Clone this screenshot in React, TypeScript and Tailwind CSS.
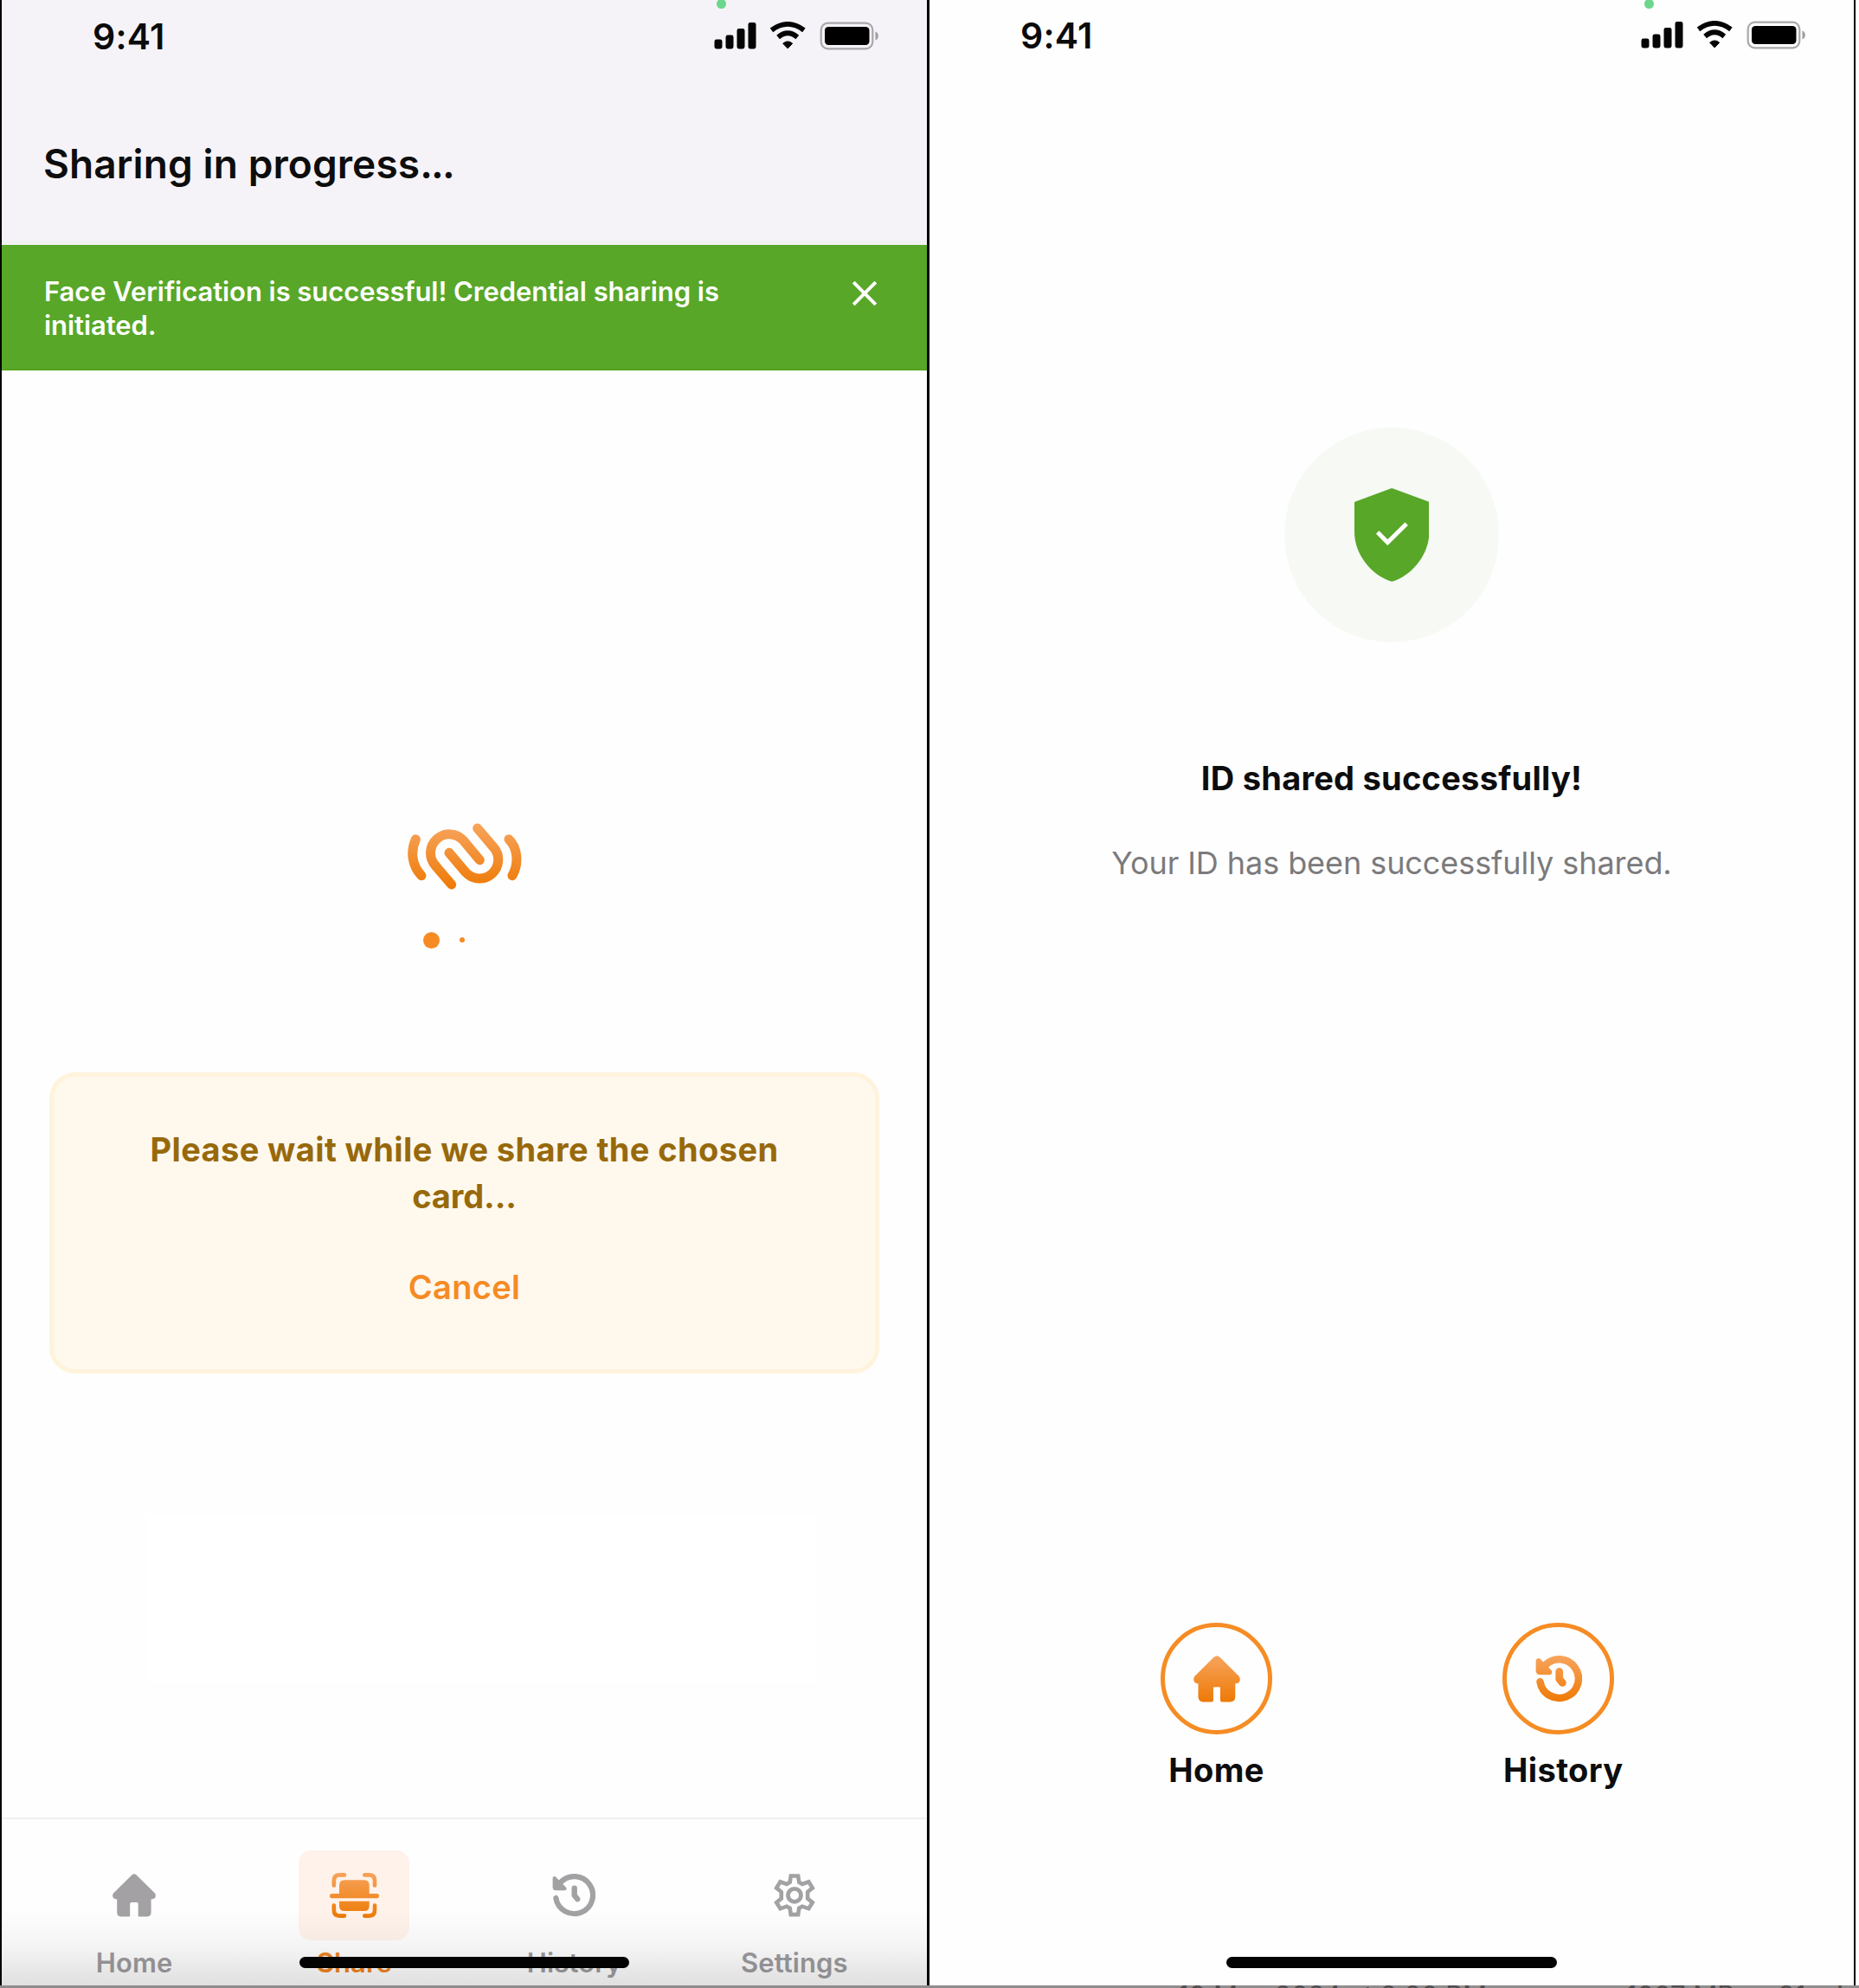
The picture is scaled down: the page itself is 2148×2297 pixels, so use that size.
import React from "react";

function StatusBar({ className = "" }: { className?: string }) {
  return (
    <div className={"relative flex h-[82px] w-full items-start " + className}>
      <span className="absolute left-[826px] top-[-1px] size-[11px] rounded-full bg-[#6bd68c]" />
      <span className="ml-[105px] w-[120px] text-[41px] font-semibold leading-[82px] tracking-[0.2px] text-[#0b0b0c]">9:41</span>
      <svg className="ml-auto mr-[54px] mt-[24px]" width="192" height="34" viewBox="0 0 192 34">
        <g fill="#050505">
          <rect x="0.5" y="20.5" width="9" height="11" rx="2.4" />
          <rect x="13.5" y="15.5" width="9" height="16" rx="2.4" />
          <rect x="26.5" y="8" width="9" height="23.5" rx="2.4" />
          <rect x="39.5" y="1" width="9" height="30.5" rx="2.4" />
          <path d="M79.7 25.2 Q85.200 20.6 90.7 25.2 L85.2 31Z" stroke="#050505" strokeWidth="1" strokeLinejoin="round" />
        </g>
        <g fill="none" stroke="#050505" strokeWidth="5.8">
          <path d="M66.500 9.8 Q85.200 -4 103.900 9.8" />
          <path d="M74.100 18 Q85.200 8.6 96.300 18" />
        </g>
        <rect x="123.7" y="1.7" width="59.6" height="29.6" rx="8" fill="none" stroke="#a9a7ab" strokeWidth="2.2" />
        <rect x="128" y="6" width="51.5" height="21" rx="4.2" fill="#000" />
        <path d="M186.500 11.5 C191 13 191 20 186.500 21.5Z" fill="#a09ea2" />
      </svg>
    </div>
  );
}

function Gradient({ id, y1, y2 }: { id: string; y1: number; y2: number }) {
  return (
    <defs>
      <linearGradient id={id} gradientUnits="userSpaceOnUse" x1="0" x2="0" y1={y1} y2={y2}>
        <stop offset="0" stopColor="#f7a35b" />
        <stop offset="1" stopColor="#ee7a06" />
      </linearGradient>
    </defs>
  );
}

function HomeIcon({ size, color, gradient }: { size: number; color?: string; gradient?: string }) {
  const paint = gradient ? "url(#" + gradient + ")" : color;
  return (
    <svg width={size} height={size} viewBox={gradient ? "-1 -1 52 52" : "0 0 50 50"}>
      {gradient && <Gradient id={gradient} y1={0} y2={50} />}
      <path
        fill={paint}
        stroke={gradient ? paint : "none"}
        strokeWidth="1.8"
        strokeLinejoin="round"
        d="M22.3 1.4 Q25 -1 27.7 1.4 L49 22.6 Q50.8 25.4 49 28 Q47.8 29.4 44.6 29.4 V44.5 Q44.6 49.6 39.6 49.6 H30.6 Q29.7 49.6 29.7 48.6 V35 Q29.7 33 27.7 33 H22.2 Q20.2 33 20.2 35 V48.6 Q20.2 49.6 19.2 49.6 H10.4 Q5.2 49.6 5.2 44.5 V29.4 Q2.2 29.4 1 28 Q-.8 25.4 1 22.6Z"
      />
    </svg>
  );
}

function HistoryIcon({ size, color, gradient }: { size: number; color?: string; gradient?: string }) {
  const paint = gradient ? "url(#" + gradient + ")" : color;
  const grow = gradient ? 2 : 0;
  return (
    <svg
      width={size}
      height={size}
      viewBox={gradient ? "-1 -1 52 52" : "0 0 50 50"}
      fill="none"
      stroke={paint}
      strokeLinecap="round"
      strokeLinejoin="round"
      className={gradient ? "" : "-ml-[2px]"}
    >
      {gradient && <Gradient id={gradient} y1={0} y2={50} />}
      <path strokeWidth={6.2 + grow} d="M4.3 28 A21.5 21.5 0 1 0 9.6 10.2" />
      <path strokeWidth={4 + grow} fill={paint} d="M2.6 5 V15.6 Q2.6 17.2 4.2 17.2 H14.6Z" />
      <path strokeWidth={6.4 + grow} d="M25.7 16.6 V25 L29.2 29.2" />
    </svg>
  );
}

function GearIcon() {
  return (
    <svg width="48" height="50" viewBox="0 0 48 50" fill="none" stroke="#a3a1a4">
      <path
        strokeWidth="4.6"
        d="M19.8 2.5 H28.2 L29.3 9.8 L33 11.9 L40.4 9.3 L44.8 16.4 L39.2 21 V28.6 L44.8 33.2 L40.4 40.3 L33 37.7 L29.3 39.8 L28.2 47.1 H19.8 L18.7 39.8 L15 37.7 L7.6 40.3 L3.2 33.2 L8.8 28.6 V21 L3.2 16.4 L7.6 9.3 L15 11.9 L18.7 9.8Z"
      />
      <circle cx="24" cy="24.8" r="7.5" strokeWidth="4.8" />
    </svg>
  );
}

function ScanIcon() {
  return (
    <svg width="57" height="52" viewBox="0 0 57 52">
      <Gradient id="scan" y1={0} y2={52} />
      <g fill="none" stroke="url(#scan)" strokeWidth="4.6" strokeLinecap="round">
        <path d="M4.8 14.5 V9 Q4.8 2.4 11.4 2.4 H17" />
        <path d="M40.2 2.4 H45.4 Q52 2.4 52 9 V14.5" />
        <path d="M4.8 37.5 V43 Q4.8 49.6 11.4 49.6 H17" />
        <path d="M40.2 49.6 H45.4 Q52 49.6 52 43 V37.5" />
      </g>
      <path
        fill="url(#scan)"
        d="M11 24 V14.3 Q11 8.3 17 8.3 H39.7 Q45.7 8.3 45.7 14.3 V24 H54.5 Q57 24 57 26.6 Q57 29.2 54.5 29.2 H2.5 Q0 29.2 0 26.6 Q0 24 2.5 24Z M11 32.7 H45.7 V38 Q45.7 44 39.7 44 H17 Q11 44 11 38Z"
      />
    </svg>
  );
}

function NavItem({ label, active, children }: { label: string; active?: boolean; children: React.ReactNode }) {
  return (
    <div className="flex flex-1 flex-col items-center">
      <div className={"flex h-[104px] w-[128px] items-center justify-center rounded-[15px] " + (active ? "bg-[#fff2ea]" : "")}>
        {children}
      </div>
      <span className={"mt-[6px] text-[31px] font-semibold leading-[40px] tracking-[0.1px] " + (active ? "text-[#ee8420]" : "text-[#9d9b9e]")}>
        {label}
      </span>
    </div>
  );
}

function SharingScreen() {
  return (
    <section className="relative flex h-[2294px] w-[1069px] flex-col bg-[#fefefe]">
      <header className="h-[283px] border-b-[5px] border-[#f2f1f1] bg-[#f5f3f7]">
        <StatusBar className="pt-px" />
        <h1 className="ml-[48px] mt-[82px] text-[46px] font-semibold leading-[50px] tracking-[0.1px] text-[#0d0d0e]">
          Sharing in progress<span className="tracking-[-1.8px]">...</span>
        </h1>
      </header>
      <div className="flex h-[145px] border-b border-[#4a9c10] bg-[#58a728] pt-[34px]">
        <p className="ml-[49px] w-[800px] text-[31px] font-semibold leading-[39px] tracking-[-0.06px] text-white">
          Face Verification is successful! Credential sharing is initiated.
        </p>
        <svg className="ml-auto mr-[57px] mt-[7px]" width="30" height="30" viewBox="0 0 30 30" stroke="#fff" strokeWidth="4">
          <path d="M2.2 2.2 L27.8 27.8 M27.8 2.2 L2.2 27.8" />
        </svg>
      </div>
      <div className="mt-[522px] flex flex-col items-center">
        <svg width="133.3" height="80" viewBox="90 90 400 240" fill="none" stroke="url(#logo)" strokeWidth="33" strokeLinecap="round">
          <Gradient id="logo" y1={100} y2={320} />
          <path d="M121 149 C103 190 106 238 141 275" />
          <path d="M444 149 C474 178 480 232 456 275" />
          <path d="M343 221 L286.500 153.500 A65 65 0 0 0 189 240 L245 306" />
          <path d="M237 196 L293.500 263 A65 65 0 0 0 391 177 L335 111" />
        </svg>
        <div className="mt-[46px] flex h-[20px] w-[96px] items-center gap-[23.5px]">
          <span className="size-[19px] rounded-full bg-[#f68b23]" />
          <span className="size-[6px] rounded-full bg-[#f68b23]" />
        </div>
      </div>
      <div className="mx-auto mt-[143px] flex h-[348px] w-[959px] flex-col items-center rounded-[30px] border-[5px] border-[#fff3dc] bg-[#fff8ed] text-center">
        <p className="mt-[57px] w-[770px] text-[38px] font-bold leading-[54px] text-[#97690b]">
          <span className="block tracking-[0.4px]">Please wait while we share the chosen</span>
          <span className="block tracking-[-0.1px]">card...</span>
        </p>
        <button className="mt-[55px] text-[38px] font-semibold leading-[46px] tracking-[0.3px] text-[#f68b23]">Cancel</button>
      </div>
      <div className="ml-[167px] mt-[164px] h-[194px] w-[774px] bg-white" />
      <nav className="relative mt-auto flex h-[194px] border-t-2 border-[#f0f0f0] px-[26px] pt-[36px]">
        <NavItem label="Home"><HomeIcon size={50} color="#a3a1a4" /></NavItem>
        <NavItem label="Share" active><ScanIcon /></NavItem>
        <NavItem label="History"><HistoryIcon size={50} color="#a3a1a4" /></NavItem>
        <NavItem label="Settings"><GearIcon /></NavItem>
        <div className="absolute inset-x-0 bottom-0 h-[88px] bg-gradient-to-b from-black/0 via-black/4 to-black/12" />
        <div className="absolute bottom-[20px] left-[344px] h-[13px] w-[381px] rounded-full bg-[#030304]" />
      </nav>
    </section>
  );
}

function ActionCircle({ label, labelClass, children }: { label: string; labelClass: string; children: React.ReactNode }) {
  return (
    <div className="flex w-[129px] flex-col">
      <div className="flex size-[129px] items-center justify-center rounded-full border-[5px] border-[#f68c24]">{children}</div>
      <span className={"mt-[16px] whitespace-nowrap text-[38px] font-bold leading-[50px] tracking-[0.4px] text-[#0d0d0e] " + labelClass}>
        {label}
      </span>
    </div>
  );
}

function SuccessScreen() {
  return (
    <section className="relative flex h-[2294px] w-[1068px] flex-col items-center bg-[#fefefe]">
      <StatusBar />
      <div className="mt-[412px] flex size-[248px] items-center justify-center rounded-full bg-[#f6f9f4]">
        <svg width="86.4" height="108" viewBox="0 0 86.4 108">
          <path fill="#58a728" d="M43.2 0 L86.4 16 V51 C86.400 76 67 101 43.200 108 C19.400 101 0 76 0 51 V16Z" />
          <path fill="none" stroke="#fff" strokeWidth="5" d="M26.700 51 L38.300 62.700 L60.200 41.200" />
        </svg>
      </div>
      <h2 className="mt-[132px] text-[38px] font-bold leading-[50px] tracking-[0.25px] text-[#0d0d0e]">ID shared successfully!</h2>
      <p className="mt-[48px] text-[36px] leading-[50px] tracking-[-0.07px] text-[#7b7a7c]">Your ID has been successfully shared.</p>
      <div className="mt-[853px] flex gap-[266px] self-start pl-[267px]">
        <ActionCircle label="Home" labelClass="text-center"><HomeIcon size={54} gradient="home-fill" /></ActionCircle>
        <ActionCircle label="History" labelClass="ml-px"><HistoryIcon size={54} gradient="history-fill" /></ActionCircle>
      </div>
      <div className="absolute bottom-[20px] left-[343px] h-[13px] w-[382px] rounded-full bg-[#030304]" />
    </section>
  );
}

export default function App() {
  return (
    <main className="h-[2297px] w-[2148px] overflow-hidden bg-[#8f8d8e] font-['Inter',sans-serif]">
      <div className="flex h-[2294px] bg-black">
        <div className="w-[2px]" />
        <SharingScreen />
        <div className="w-[3px]" />
        <SuccessScreen />
        <div className="w-[2px]" />
        <div className="flex-1 bg-white" />
      </div>
      <div className="flex h-[3px] items-start overflow-hidden whitespace-pre pl-[1361px] text-[31px] leading-[30px] text-[#504e50]">
        <span className="-mt-[3px] w-[519px]">10 May 2024 at 9:20 PM</span>
        <span className="-mt-[3px] w-[176px]">1007 MB</span>
        <span className="-mt-[3px]">91 min</span>
      </div>
    </main>
  );
}
